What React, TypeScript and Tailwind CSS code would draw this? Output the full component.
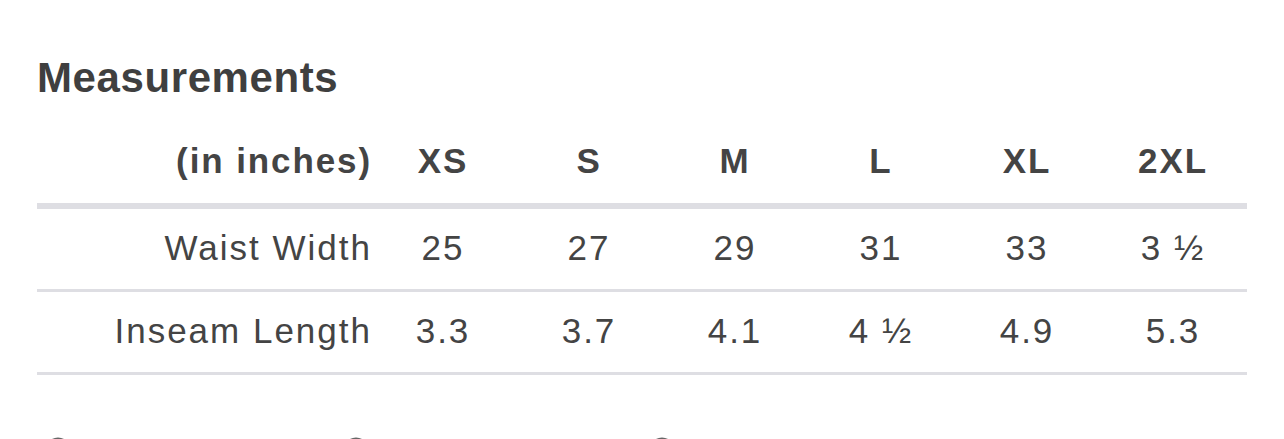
const SIZES = ["XS", "S", "M", "L", "XL", "2XL"]

const ROWS = [
  { label: "Waist Width", values: ["25", "27", "29", "31", "33", "3 ½"] },
  { label: "Inseam Length", values: ["3.3", "3.7", "4.1", "4 ½", "4.9", "5.3"] },
]

function Ring() {
  return (
    <svg width="26" height="26" viewBox="0 0 26 26" fill="none" aria-hidden>
      <circle cx="13" cy="13" r="11.5" stroke="#666" strokeWidth="2" />
    </svg>
  )
}

export default function App() {
  return (
    <main className="h-[439px] overflow-hidden bg-white px-[37px] pt-[57px] font-['Liberation_Sans',Arial,sans-serif] text-[#444]">
      <h2 className="text-[42px] leading-none font-bold tracking-[0.6px] text-[#3f3f3f]">
        Measurements
      </h2>

      {/* Size table */}
      <div className="mt-[24px]">
        <div className="grid h-[86px] grid-cols-[333px_repeat(6,146px)] items-center border-b-[6px] border-[#dedee3] pb-[5px] text-[35px] leading-none font-bold tracking-[1.9px]">
          <div className="-mr-[2px] text-right">(in inches)</div>
          {SIZES.map((s) => (
            <div key={s} className="text-center">
              {s}
            </div>
          ))}
        </div>

        {ROWS.map((row) => (
          <div
            key={row.label}
            className="grid h-[83px] grid-cols-[333px_repeat(6,146px)] items-center border-b-[3px] border-[#dedee3] pb-[4px] text-[35px] leading-none tracking-[2px]"
          >
            <div className="-mr-[2px] text-right">{row.label}</div>
            {row.values.map((v, i) => (
              <div key={i} className="text-center">
                {v}
              </div>
            ))}
          </div>
        ))}
      </div>

      {/* Next section, cut off by the viewport */}
      <div className="mt-[62px] flex">
        <div className="ml-[8px] w-[298px]">
          <Ring />
        </div>
        <div className="w-[306px]">
          <Ring />
        </div>
        <Ring />
      </div>
    </main>
  )
}
